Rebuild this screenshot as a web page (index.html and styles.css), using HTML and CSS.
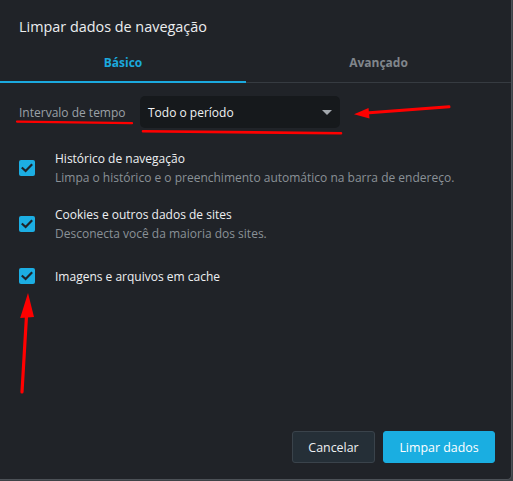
FILE: index.html
```html
<!DOCTYPE html>
<html lang="pt-BR">
<head>
<meta charset="utf-8">
<title>Limpar dados de navegação</title>
<link rel="stylesheet" href="styles.css">
</head>
<body>
<div class="dialog">
  <div class="title">Limpar dados de navegação</div>
  <div class="tabs">
    <div class="tab active">Básico</div>
    <div class="tab">Avançado</div>
  </div>
  <div class="range">
    <span class="range-label">Intervalo de tempo</span>
    <div class="select">
      <span>Todo o período</span>
      <span class="caret"></span>
    </div>
  </div>
  <div class="options">
    <div class="option">
      <span class="check"><svg viewBox="0 0 16 16" width="16" height="16"><path d="M3.6 8.2 L6.6 11 L12.4 5" fill="none" stroke="#1f2329" stroke-width="2.2" stroke-linecap="square"/></svg></span>
      <div class="option-text">
        <div class="option-title">Histórico de navegação</div>
        <div class="option-desc">Limpa o histórico e o preenchimento automático na barra de endereço.</div>
      </div>
    </div>
    <div class="option">
      <span class="check"><svg viewBox="0 0 16 16" width="16" height="16"><path d="M3.6 8.2 L6.6 11 L12.4 5" fill="none" stroke="#1f2329" stroke-width="2.2" stroke-linecap="square"/></svg></span>
      <div class="option-text">
        <div class="option-title">Cookies e outros dados de sites</div>
        <div class="option-desc">Desconecta você da maioria dos sites.</div>
      </div>
    </div>
    <div class="option single">
      <span class="check"><svg viewBox="0 0 16 16" width="16" height="16"><path d="M3.6 8.2 L6.6 11 L12.4 5" fill="none" stroke="#1f2329" stroke-width="2.2" stroke-linecap="square"/></svg></span>
      <div class="option-text">
        <div class="option-title">Imagens e arquivos em cache</div>
      </div>
    </div>
  </div>
  <div class="footer">
    <button class="btn btn-cancel">Cancelar</button>
    <button class="btn btn-primary">Limpar dados</button>
  </div>
  <svg class="marks" viewBox="0 0 511 479" width="511" height="479">
    <path d="M17 121.6 Q75 122.4 132 123.2" fill="none" stroke="#ff0000" stroke-width="2.2" stroke-linecap="round"/>
    <path d="M143 131.2 Q240 132.4 341 133.3" fill="none" stroke="#ff0000" stroke-width="2.6" stroke-linecap="round"/>
    <path d="M449 106.8 L366 113" fill="none" stroke="#ff0000" stroke-width="3" stroke-linecap="round"/>
    <polygon points="354,114.2 368.5,108 369.5,118.6" fill="#ff0000"/>
    <path d="M22 392 L26.6 314" fill="none" stroke="#ff0000" stroke-width="3.2" stroke-linecap="round"/>
    <polygon points="28,293 20.2,318 34,317" fill="#ff0000"/>
  </svg>
</div>
</body>
</html>
```

FILE: styles.css
```css
html, body {
  margin: 0;
  padding: 0;
}
body {
  background: #3e4247;
  width: 513px;
  height: 481px;
  overflow: hidden;
  font-family: "Open Sans", "Noto Sans", sans-serif;
}
.dialog {
  position: relative;
  width: 511px;
  height: 479px;
  background: #202328;
  border-right: 1px solid #4c5157;
  border-bottom: 1px solid #4c5157;
  border-bottom-right-radius: 5px;
  display: flex;
  flex-direction: column;
  overflow: hidden;
}
.title {
  box-sizing: border-box;
  height: 45px;
  padding: 17px 0 0 19px;
  font-size: 14.4px;
  line-height: 20px;
  color: #eceef0;
}
.tabs {
  display: grid;
  grid-template-columns: 246px 1fr;
  height: 37px;
  border-bottom: 1px solid #363b41;
}
.tab {
  box-sizing: border-box;
  text-align: center;
  font-size: 12px;
  font-weight: 700;
  line-height: 20px;
  padding-top: 8px;
  color: #80868c;
}
.tab.active {
  color: #1ba9de;
  height: 38px;
  border-bottom: 2px solid #1ba9de;
  margin-bottom: -1px;
}
.range {
  display: flex;
  align-items: center;
  gap: 12px;
  margin-top: 13px;
  padding-left: 19px;
}
.range-label {
  font-size: 12px;
  color: #9ba1a7;
  width: 109px;
}
.select {
  box-sizing: border-box;
  width: 200px;
  height: 32px;
  background: #16191c;
  border-radius: 5px;
  display: flex;
  align-items: center;
  justify-content: space-between;
  padding: 0 8px 0 8px;
  font-size: 12px;
  color: #f1f2f3;
}
.caret {
  width: 0;
  height: 0;
  border-left: 5px solid transparent;
  border-right: 5px solid transparent;
  border-top: 5px solid #a3a8ad;
  margin-right: 0;
  margin-top: 1px;
}
.options {
  margin-top: 12px;
  display: flex;
  flex-direction: column;
}
.option {
  display: flex;
  align-items: center;
  gap: 20px;
  min-height: 56px;
  padding-left: 19px;
}
.option.single {
  min-height: 48px;
}
.check {
  flex: none;
  width: 16px;
  height: 16px;
  border-radius: 2px;
  background: #1caee3;
  display: block;
}
.check svg {
  display: block;
}
.option-title {
  font-size: 12px;
  line-height: 19px;
  color: #eef0f2;
}
.option-desc {
  font-size: 12px;
  line-height: 19px;
  color: #8a9197;
}
.footer {
  margin-top: auto;
  display: flex;
  justify-content: flex-end;
  gap: 8px;
  padding: 0 16px 16px 0;
}
.btn {
  box-sizing: border-box;
  height: 32px;
  border-radius: 3px;
  font-family: "Open Sans", "Noto Sans", sans-serif;
  font-size: 12.4px;
  padding: 0;
  cursor: pointer;
}
.btn-cancel {
  width: 83px;
  background: #252f37;
  border: 1px solid #3a434b;
  color: #eef0f2;
}
.btn-primary {
  width: 112px;
  background: #1aaee1;
  border: 1px solid #1aaee1;
  color: #ffffff;
}
.marks {
  position: absolute;
  left: 0;
  top: 0;
  pointer-events: none;
}
```
